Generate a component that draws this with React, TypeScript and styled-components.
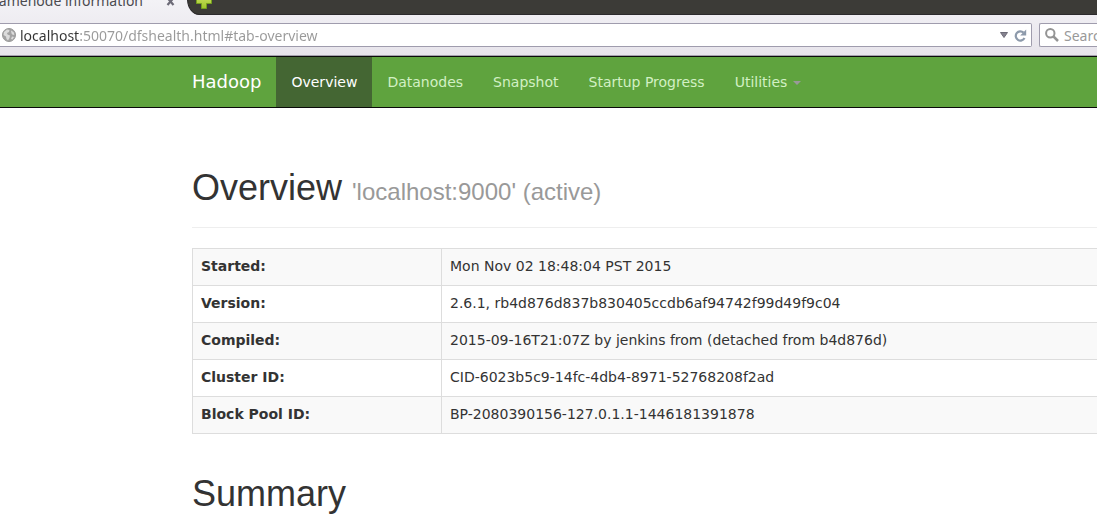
import React from "react";
import styled, { createGlobalStyle } from "styled-components";

const GlobalStyle = createGlobalStyle`
  *, *::before, *::after { box-sizing: border-box; }
  body {
    margin: 0;
    background: #fff;
    color: #333;
    font: 14px/20px "DejaVu Sans", sans-serif;
    overflow-x: hidden;
  }
`;

const uiFont = `"Noto Sans", "Open Sans", sans-serif`;

const Chrome = styled.div`
  background: linear-gradient(#f3f2f6, #e7e4eb);
  border-bottom: 1px solid #a5a2ad;
  font-family: ${uiFont};
`;

const TabStrip = styled.div`
  display: flex;
  align-items: flex-end;
  height: 15px;
  overflow: hidden;
`;

const Tab = styled.div`
  display: flex;
  flex: none;
  justify-content: flex-end;
  align-items: center;
  gap: 23px;
  width: 187px;
  height: 28px;
  padding: 0 12px 0 0;
  color: #4b4b50;
  font-size: 14px;
  line-height: 28px;
  white-space: nowrap;
`;

const IconButton = styled.button`
  display: flex;
  flex: none;
  padding: 0;
  border: 0;
  background: none;
`;

const StripRest = styled.div`
  flex: 1;
  height: 28px;
  padding: 6px 8px;
  background: #3c3b37;
  border-bottom: 1px solid #2c2a2c;
  border-left: 1px solid #2c2a2c;
  border-bottom-left-radius: 12px 16px;
`;

const Toolbar = styled.div`
  display: flex;
  gap: 7px;
  padding: 8px 0;
`;

const Field = styled.label<{ $search?: boolean }>`
  display: flex;
  align-items: center;
  flex: ${(p) => (p.$search ? "none" : "1")};
  width: ${(p) => (p.$search ? "58px" : "auto")};
  min-width: 0;
  height: 24px;
  padding: ${(p) => (p.$search ? "0 0 0 5px" : "0 4px 0 2px")};
  gap: ${(p) => (p.$search ? "5px" : "4px")};
  background: #fff;
  border: 1px solid #9f9cad;
  border-width: ${(p) => (p.$search ? "1px 0 1px 1px" : "1px 1px 1px 0")};
  border-radius: ${(p) => (p.$search ? "2px 0 0 2px" : "0 2px 2px 0")};
`;

const FieldActions = styled.span`
  display: flex;
  align-items: center;
  gap: 6px;
`;

const TextInput = styled.input`
  flex: 1;
  min-width: 0;
  height: 22px;
  padding: 0;
  border: 0;
  outline: 0;
  background: none;
  color: #999;
  font: 14px/20px ${uiFont};
  &::placeholder { color: #999; opacity: 1; }
`;

/* The host name is dark and the rest of the address is grey. */
const AddressInput = styled(TextInput)`
  background: linear-gradient(90deg, #333 59px, #999 59px);
  background-clip: text;
  -webkit-background-clip: text;
  -webkit-text-fill-color: transparent;
`;

const Navbar = styled.nav`
  display: flex;
  height: 52px;
  padding-left: 192px;
  background: #5fa33e;
  border-top: 1px solid #0a0a0a;
  border-bottom: 1px solid #0a0a0a;
`;

const Brand = styled.a`
  padding: 15px 15px 15px 0;
  color: #fff;
  font-size: 18px;
  line-height: 20px;
  text-decoration: none;
`;

const NavList = styled.ul`
  display: flex;
  margin: 0;
  padding: 0;
  list-style: none;
`;

const NavLink = styled.a<{ $active?: boolean }>`
  display: flex;
  align-items: center;
  gap: 6px;
  height: 50px;
  padding: 0 15px;
  white-space: nowrap;
  text-decoration: none;
  color: ${(p) => (p.$active ? "#fff" : "#d2f0c4")};
  background: ${(p) => (p.$active ? "#446633" : "transparent")};
`;

const Caret = styled.span`
  margin-top: 2px;
  border: 4px solid transparent;
  border-top-color: #999;
  border-bottom: 0;
`;

const Content = styled.main`
  padding: 60px 0 0 192px;
`;

const Heading = styled.h1`
  margin: 0;
  font: 500 36px/40px "Liberation Sans", sans-serif;
  white-space: nowrap;
`;

const Small = styled.small`
  color: #999;
  font-size: 24px;
  font-weight: 400;
`;

const PageHeader = styled.header`
  margin-bottom: 20px;
  padding-bottom: 15px;
  border-bottom: 1px solid #eee;
`;

const InfoTable = styled.table`
  width: 100%;
  margin-bottom: 40px;
  border-collapse: collapse;
  table-layout: fixed;
  border-left: 1px solid #ddd;
`;

const Row = styled.tr`
  &:nth-child(odd) { background: #f9f9f9; }
`;

const Label = styled.th`
  width: 249px;
  padding: 7px 8px 9px;
  border: 1px solid #ddd;
  text-align: left;
`;

const Value = styled.td`
  padding: 7px 8px 9px;
  border: 1px solid #ddd;
  border-right: 0;
`;

const navItems = [
  { text: "Overview", active: true },
  { text: "Datanodes" },
  { text: "Snapshot" },
  { text: "Startup Progress" },
  { text: "Utilities", menu: true },
];

const rows = [
  ["Started:", "Mon Nov 02 18:48:04 PST 2015"],
  ["Version:", "2.6.1, rb4d876d837b830405ccdb6af94742f99d49f9c04"],
  ["Compiled:", "2015-09-16T21:07Z by jenkins from (detached from b4d876d)"],
  ["Cluster ID:", "CID-6023b5c9-14fc-4db4-8971-52768208f2ad"],
  ["Block Pool ID:", "BP-2080390156-127.0.1.1-1446181391878"],
];

const CloseIcon = () => (
  <svg width="9" height="9" viewBox="0 0 9 9">
    <path d="M1.5 1 7.5 8M7.5 1 1.5 8" stroke="#6d6b78" strokeWidth="2.2" />
  </svg>
);

const PlusIcon = () => (
  <svg width="16" height="16" viewBox="0 0 16 16">
    <defs>
      <linearGradient id="plus" x1="0" y1="0" x2="0" y2="1">
        <stop offset="0" stopColor="#d3e46a" />
        <stop offset="1" stopColor="#9fc42a" />
      </linearGradient>
    </defs>
    <path d="M5.5.5h5v5h5v5h-5v5h-5v-5h-5v-5h5z" fill="url(#plus)" stroke="#76a01c" />
  </svg>
);

const GlobeIcon = () => (
  <svg width="14" height="14" viewBox="0 0 14 14">
    <circle cx="7" cy="7" r="6.5" fill="#a3a3a3" stroke="#999" />
    <path d="M2 4 5 1.5 7.5 2 7 4 5 5 5.5 6.5 8 7.5 7.5 10 6 12.5 4.5 11 4 8.5 1.5 7z" fill="#dcdcdc" />
    <path d="M9 2.5 11.5 4 12.5 6.5 11 7 9.5 5.5zM10 8.5l2 .5-1.500 2.500-1.500-.5z" fill="#dcdcdc" />
  </svg>
);

const ArrowIcon = () => (
  <svg width="8" height="6" viewBox="0 0 8 6">
    <path d="M.5.5h7L4 5.500z" fill="#85838f" stroke="#6e6c78" />
  </svg>
);

const ReloadIcon = () => (
  <svg width="13" height="13" viewBox="0 0 13 13">
    <path d="M9.500 3.600A4.600 4.600 0 1 0 10.500 9" fill="none" stroke="#8d9aab" strokeWidth="2.200" />
    <path d="M12.200.5v6H6.200z" fill="#8d9aab" />
  </svg>
);

const SearchIcon = () => (
  <svg width="14" height="14" viewBox="0 0 14 14">
    <circle cx="5.300" cy="5.300" r="4.200" fill="none" stroke="#949494" strokeWidth="2" />
    <path d="m8.500 8.500 4.500 4.500" stroke="#949494" strokeWidth="2.500" />
  </svg>
);

export default function App() {
  return (
    <>
      <GlobalStyle />
      <Chrome>
        <TabStrip>
          <Tab>
            <span>Namenode information</span>
            <IconButton aria-label="Close tab"><CloseIcon /></IconButton>
          </Tab>
          <StripRest>
            <IconButton aria-label="New tab"><PlusIcon /></IconButton>
          </StripRest>
        </TabStrip>
        <Toolbar>
          <Field>
            <GlobeIcon />
            <AddressInput
              aria-label="Address"
              defaultValue="localhost:50070/dfshealth.html#tab-overview"
            />
            <FieldActions>
              <IconButton aria-label="Show history"><ArrowIcon /></IconButton>
              <IconButton aria-label="Reload"><ReloadIcon /></IconButton>
            </FieldActions>
          </Field>
          <Field $search>
            <SearchIcon />
            <TextInput aria-label="Search" placeholder="Search" />
          </Field>
        </Toolbar>
      </Chrome>
      <Navbar>
        <Brand href="#">Hadoop</Brand>
        <NavList>
          {navItems.map((item) => (
            <li key={item.text}>
              <NavLink href="#" $active={item.active}>
                {item.text}
                {item.menu && <Caret />}
              </NavLink>
            </li>
          ))}
        </NavList>
      </Navbar>
      <Content>
        <PageHeader>
          <Heading>
            Overview <Small>'localhost:9000' (active)</Small>
          </Heading>
        </PageHeader>
        <InfoTable>
          <tbody>
            {rows.map(([label, value]) => (
              <Row key={label}>
                <Label scope="row">{label}</Label>
                <Value>{value}</Value>
              </Row>
            ))}
          </tbody>
        </InfoTable>
        <Heading as="h2">Summary</Heading>
      </Content>
    </>
  );
}
